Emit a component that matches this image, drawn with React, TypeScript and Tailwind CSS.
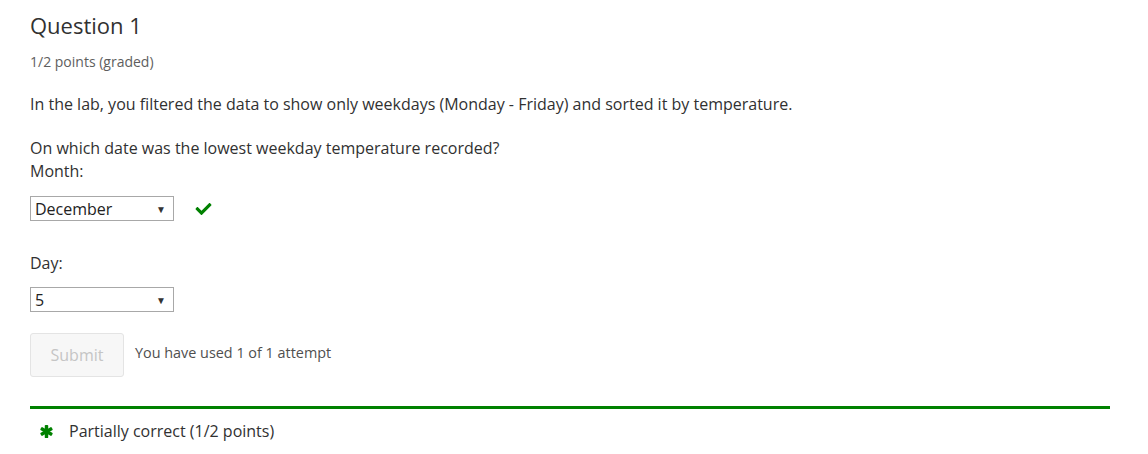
import { FaCheck } from "react-icons/fa";

function FakeSelect({ value }: { value: string }) {
  return (
    <div className="flex h-[25px] w-[144px] items-center justify-between border border-[#a8a8a8] bg-white pl-[4px] pr-[7px] text-[16px] leading-none text-[#222]">
      <span>{value}</span>
      <span className="text-[10px] text-[#333]">▼</span>
    </div>
  );
}

function Asterisk() {
  return (
    <svg viewBox="0 0 12 12" className="h-[13px] w-[13px] text-[#008100]" fill="currentColor" aria-hidden="true">
      <rect x="4.4" y="0" width="3.2" height="12" rx="0.8" />
      <rect x="4.4" y="0" width="3.2" height="12" rx="0.8" transform="rotate(60 6 6)" />
      <rect x="4.4" y="0" width="3.2" height="12" rx="0.8" transform="rotate(120 6 6)" />
    </svg>
  );
}

export default function App() {
  return (
    <div className="min-h-[454px] w-[1148px] bg-white px-[30px] font-['Open_Sans',sans-serif] text-[#313131]">
      <h3 className="pt-[10px] text-[22px] leading-[30px] text-[#313131]">Question 1</h3>
      <div className="mt-[12px] text-[14px] leading-[20px] text-[#5e5e5e]">1/2 points (graded)</div>

      <p className="mt-[20px] text-[16px] leading-[24px]">
        In the lab, you filtered the data to show only weekdays (Monday - Friday) and sorted it by temperature.
      </p>

      <div className="mt-[21px] text-[16px] leading-[23px]">
        <p>On which date was the lowest weekday temperature recorded?</p>
        <p>Month:</p>
      </div>

      <div className="mt-[13px] flex items-center gap-[21px]">
        <FakeSelect value="December" />
        <FaCheck className="h-[16px] w-[17px] text-[#008100]" />
      </div>

      <div className="mt-[30px] text-[16px] leading-[24px]">Day:</div>
      <div className="mt-[12px]">
        <FakeSelect value="5" />
      </div>

      <div className="mt-[21px] flex items-center gap-[11px]">
        <button className="h-[44px] w-[94px] rounded-[3px] border border-[#e4e4e4] bg-[#f7f7f7] text-[16px] text-[#c5c5c5]">
          Submit
        </button>
        <span className="mb-[5px] text-[14.4px] text-[#4f4f4f]">You have used 1 of 1 attempt</span>
      </div>

      <div className="mt-[29px] w-[1080px] border-t-[3px] border-[#008100]" />
      <div className="flex items-center gap-[17px] pl-[10px] pt-[10px] text-[16px] leading-[24px]">
        <Asterisk />
        <span className="-ml-[1px]">Partially correct (1/2 points)</span>
      </div>
    </div>
  );
}
